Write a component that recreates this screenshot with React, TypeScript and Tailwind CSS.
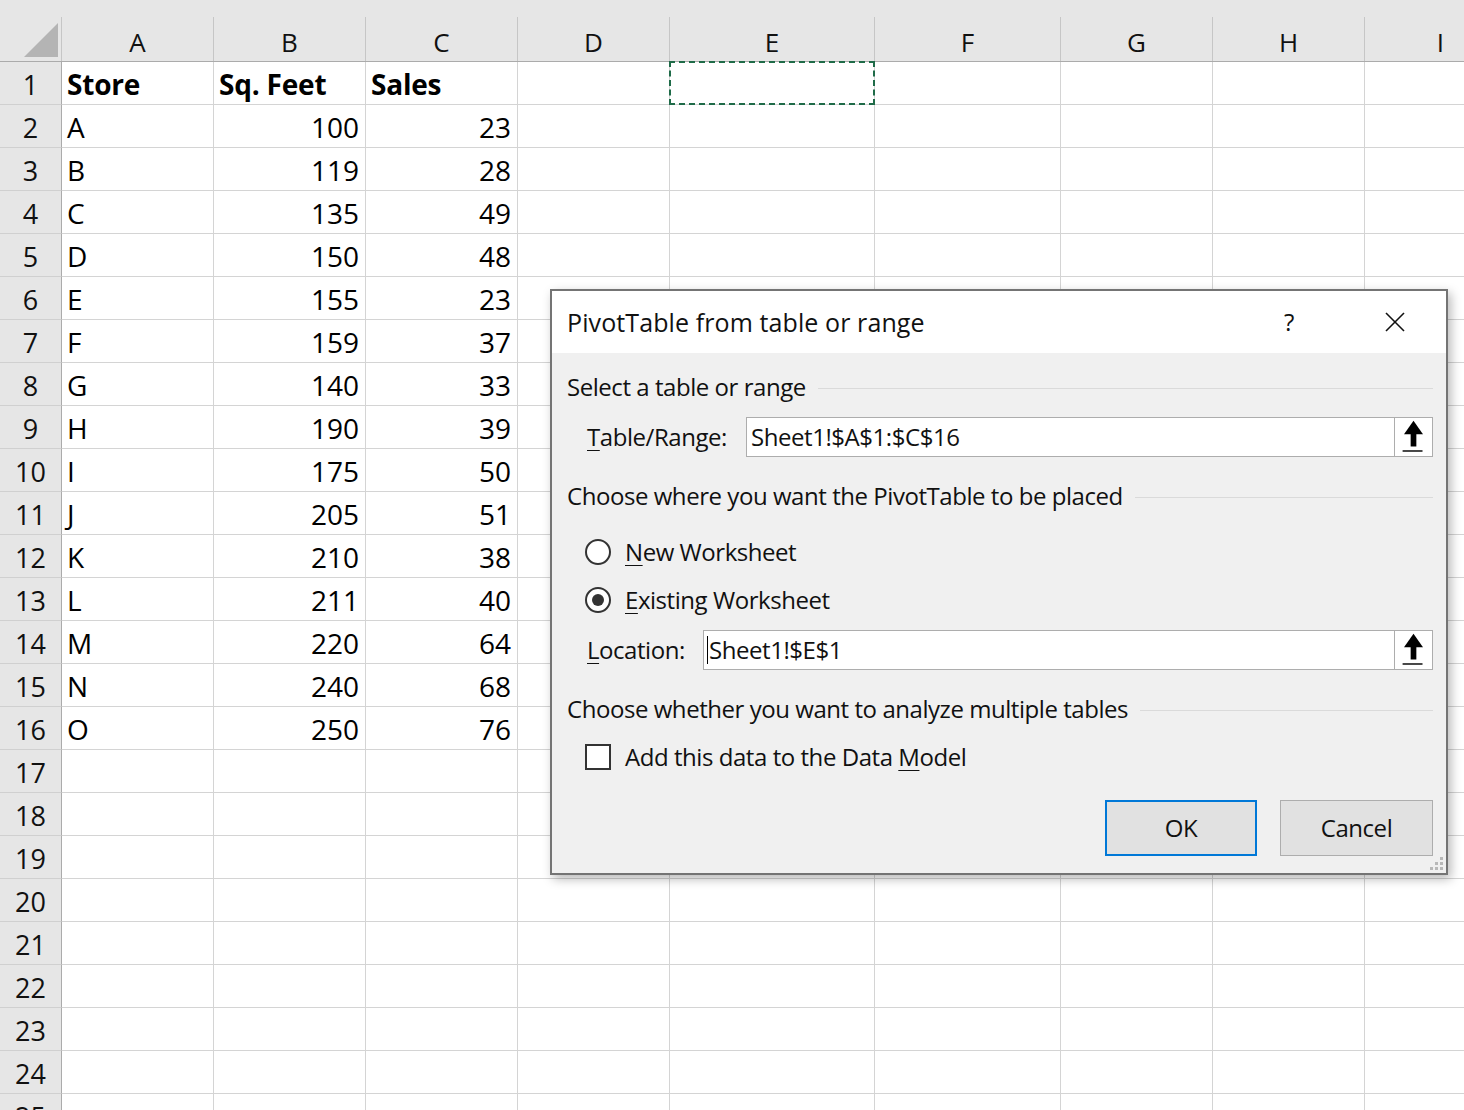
import React from "react";

const FONT = { fontFamily: '"Open Sans", "Noto Sans", "Liberation Sans", sans-serif' };

const COLS: { l: string; w: string }[] = [
  { l: "A", w: "w-[152px]" },
  { l: "B", w: "w-[152px]" },
  { l: "C", w: "w-[152px]" },
  { l: "D", w: "w-[152px]" },
  { l: "E", w: "w-[205px]" },
  { l: "F", w: "w-[186px]" },
  { l: "G", w: "w-[152px]" },
  { l: "H", w: "w-[152px]" },
  { l: "I", w: "w-[152px]" },
];

const DATA: [string, string, string][] = [
  ["A", "100", "23"],
  ["B", "119", "28"],
  ["C", "135", "49"],
  ["D", "150", "48"],
  ["E", "155", "23"],
  ["F", "159", "37"],
  ["G", "140", "33"],
  ["H", "190", "39"],
  ["I", "175", "50"],
  ["J", "205", "51"],
  ["K", "210", "38"],
  ["L", "211", "40"],
  ["M", "220", "64"],
  ["N", "240", "68"],
  ["O", "250", "76"],
];

function HeaderRow() {
  return (
    <div className="flex h-[62px] w-max bg-[#e6e6e6] border-b border-[#ababab]">
      <div className="w-[62px] shrink-0 self-end h-[44px] border-r border-[#c6c6c6] relative">
        <svg className="absolute left-0 top-[-17px]" width="61" height="61" viewBox="0 0 61 61">
          <polygon points="58,23 58,57 24,57" fill="#b4b4b4" />
        </svg>
      </div>
      {COLS.map((c) => (
        <div
          key={c.l}
          className={`${c.w} shrink-0 self-end h-[44px] border-r border-[#c6c6c6] flex items-center justify-center pt-[5px] text-[26px] leading-none text-[#111]`}
        >
          {c.l}
        </div>
      ))}
    </div>
  );
}

function Row({ n }: { n: number }) {
  let a = "";
  let b = "";
  let c = "";
  let bold = false;
  if (n === 1) {
    a = "Store";
    b = "Sq. Feet";
    c = "Sales";
    bold = true;
  } else if (n <= 16) {
    [a, b, c] = DATA[n - 2];
  }
  return (
    <div className="flex h-[43px] w-max">
      <div className="w-[62px] shrink-0 bg-[#e6e6e6] border-r border-[#ababab] border-b border-b-[#d0d0d0] flex items-center justify-center pt-[3px] text-[27px] leading-none text-[#111]">
        {n}
      </div>
      {COLS.map((col, i) => {
        let content: React.ReactNode = null;
        let align = "justify-start pl-[5px]";
        if (i === 0) content = a;
        if (i === 1) {
          content = b;
          if (!bold) align = "justify-end pr-[6px]";
        }
        if (i === 2) {
          content = c;
          if (!bold) align = "justify-end pr-[6px]";
        }
        return (
          <div
            key={col.l}
            className={`${col.w} shrink-0 relative border-r border-b border-[#d4d4d4] flex items-center ${align} pt-[2px] text-[28px] leading-none text-black whitespace-nowrap ${bold ? "font-bold tracking-[-0.2px]" : ""}`}
          >
            {content}
            {n === 1 && i === 4 && (
              <div className="absolute left-[-1px] top-[-1px] right-[-1px] bottom-[-1px] border-2 border-dashed border-[#1f6b48]" />
            )}
          </div>
        );
      })}
    </div>
  );
}

function PickButton() {
  return (
    <div className="w-[39px] h-[40px] shrink-0 border border-[#adadad] bg-white flex items-center justify-center">
      <svg width="39" height="40" viewBox="0 0 39 40">
        <polygon points="19.5,3 29.5,17 9.5,17" fill="#000" />
        <rect x="16.5" y="16" width="6" height="14" fill="#000" />
        <rect x="8" y="34" width="21" height="1.5" fill="#000" />
      </svg>
    </div>
  );
}

function GroupHeading({ children }: { children: React.ReactNode }) {
  return (
    <div className="flex items-center h-[40px]">
      <span className="whitespace-nowrap">{children}</span>
      <div className="flex-1 h-px bg-[#dadada] ml-[12px] mt-[2px]" />
    </div>
  );
}

function Radio({ checked }: { checked?: boolean }) {
  return (
    <div className="w-[26px] h-[26px] shrink-0 rounded-full border-2 border-[#333] bg-white flex items-center justify-center">
      {checked && <div className="w-[12px] h-[12px] rounded-full bg-[#333]" />}
    </div>
  );
}

function Dialog() {
  return (
    <div className="absolute left-[550px] top-[289px] w-[898px] h-[586px] border-2 border-[#747474] bg-[#f0f0f0] shadow-[3px_4px_10px_rgba(0,0,0,0.28)] flex flex-col text-[24px] tracking-[-0.45px] text-[#111]">
      <div className="h-[62px] bg-white flex items-center pl-[15px] pr-[40px] shrink-0">
        <span className="flex-1 pt-[1px] text-[25px] tracking-[0.1px]">PivotTable from table or range</span>
        <span className="w-[20px] text-center mr-[85px]">?</span>
        <svg width="22" height="22" viewBox="0 0 22 22">
          <line x1="2" y1="2" x2="20" y2="20" stroke="#111" strokeWidth="1.6" />
          <line x1="20" y1="2" x2="2" y2="20" stroke="#111" strokeWidth="1.6" />
        </svg>
      </div>
      <div className="flex-1 flex flex-col pl-[15px] pr-[13px] relative">
        <div className="mt-[14px]">
          <GroupHeading>Select a table or range</GroupHeading>
        </div>
        <div className="mt-[10px] flex items-center h-[40px]">
          <div className="w-[179px] shrink-0 pl-[20px] whitespace-nowrap">
            <span className="underline underline-offset-[4px] decoration-1">T</span>able/Range:
          </div>
          <div className="flex-1 h-[40px] bg-white border border-[#adadad] border-r-0 flex items-center pl-[4px]">
            Sheet1!$A$1:$C$16
          </div>
          <PickButton />
        </div>
        <div className="mt-[19px]">
          <GroupHeading>Choose where you want the PivotTable to be placed</GroupHeading>
        </div>
        <div className="mt-[16px] flex items-center h-[40px] pl-[18px] gap-[14px]">
          <Radio />
          <span>
            <span className="underline underline-offset-[4px] decoration-1">N</span>ew Worksheet
          </span>
        </div>
        <div className="mt-[8px] flex items-center h-[40px] pl-[18px] gap-[14px]">
          <Radio checked />
          <span>
            <span className="underline underline-offset-[4px] decoration-1">E</span>xisting Worksheet
          </span>
        </div>
        <div className="mt-[10px] flex items-center h-[40px]">
          <div className="w-[136px] shrink-0 pl-[20px] whitespace-nowrap">
            <span className="underline underline-offset-[4px] decoration-1">L</span>ocation:
          </div>
          <div className="flex-1 h-[40px] bg-white border border-[#adadad] border-r-0 flex items-center pl-[3px]">
            <span className="w-px h-[28px] bg-black mr-[1px]" />
            Sheet1!$E$1
          </div>
          <PickButton />
        </div>
        <div className="mt-[19px]">
          <GroupHeading>Choose whether you want to analyze multiple tables</GroupHeading>
        </div>
        <div className="mt-[8px] flex items-center h-[40px] pl-[18px] gap-[14px]">
          <div className="w-[26px] h-[26px] shrink-0 border-2 border-[#333] bg-white" />
          <span>
            Add this data to the Data <span className="underline underline-offset-[4px] decoration-1">M</span>odel
          </span>
        </div>
        <div className="mt-[23px] flex justify-end gap-[23px]">
          <button className="w-[152px] h-[56px] bg-[#e1e1e1] border-2 border-[#0078d7] text-[24px] text-[#111]">
            OK
          </button>
          <button className="w-[153px] h-[56px] bg-[#e1e1e1] border border-[#adadad] text-[24px] text-[#111]">
            Cancel
          </button>
        </div>
        <svg className="absolute right-[1px] bottom-[1px]" width="18" height="18" viewBox="0 0 18 18">
          <rect x="13" y="3" width="3" height="3" fill="#b8b8b8" />
          <rect x="8" y="8" width="3" height="3" fill="#b8b8b8" />
          <rect x="13" y="8" width="3" height="3" fill="#b8b8b8" />
          <rect x="3" y="13" width="3" height="3" fill="#b8b8b8" />
          <rect x="8" y="13" width="3" height="3" fill="#b8b8b8" />
          <rect x="13" y="13" width="3" height="3" fill="#b8b8b8" />
        </svg>
      </div>
    </div>
  );
}

export default function App() {
  const rows = Array.from({ length: 25 }, (_, i) => i + 1);
  return (
    <div className="relative w-[1464px] h-[1110px] overflow-hidden bg-white" style={FONT}>
      <HeaderRow />
      {rows.map((n) => (
        <Row key={n} n={n} />
      ))}
      <Dialog />
    </div>
  );
}
